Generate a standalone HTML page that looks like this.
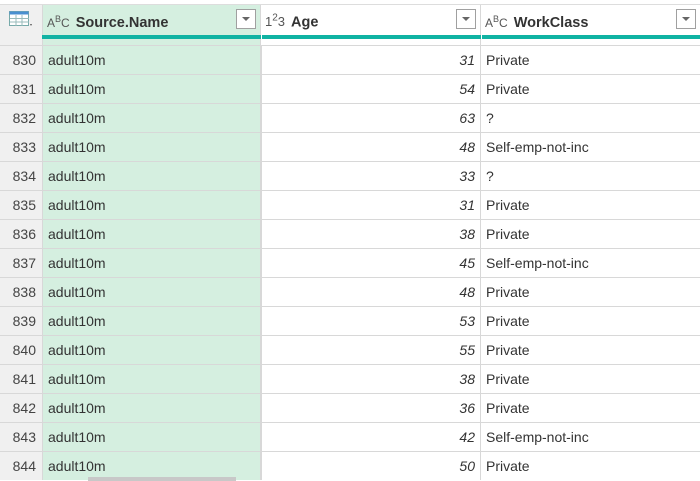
<!DOCTYPE html>
<html><head><style>
body{margin:0;width:700px;height:481px;overflow:hidden;background:#fff;font-family:"Liberation Sans",sans-serif;font-size:14px;color:#333;position:relative}
.a{position:absolute}
.row{position:absolute;left:0;width:700px;height:29px;border-top:1px solid #d8d8d8;box-sizing:border-box}
.row div{position:absolute;top:0;height:28px;line-height:29px}
.n{left:0;width:42px;background:#f0f0f0;text-align:right;padding-right:6px;box-sizing:border-box;color:#444}
.s{left:42px;width:218px;background:#d5efe0;padding-left:5px;box-sizing:border-box;border-left:1px solid #d8d8d8}
.g{left:261px;width:219px;text-align:right;padding-right:5px;box-sizing:border-box;font-style:italic;border-left:1px solid #d8d8d8}
.w{left:480px;width:220px;padding-left:5px;box-sizing:border-box;border-left:1px solid #d8d8d8}
.dd{position:absolute;top:9px;width:20px;height:20px;border:1px solid #a0a0a0;background:#fff;box-sizing:border-box}
.dd:after{content:"";position:absolute;left:5px;top:7px;border-left:4px solid transparent;border-right:4px solid transparent;border-top:4px solid #666}
.h{position:absolute;top:4px;height:30px;line-height:30px;font-weight:bold;font-size:14.5px;color:#333}
.t{font-weight:normal;font-size:12px;color:#555;margin-right:6px}
</style></head><body>
<div class="a" style="left:0;top:4px;width:42px;height:35px;background:#f0f0f0"></div>
<div class="a" style="left:42px;top:4px;width:218px;height:35px;background:#d5efe0"></div>
<div class="a" style="left:261px;top:4px;width:439px;height:31px;background:#fff"></div>
<div class="a" style="left:42px;top:4px;width:1px;height:476px;background:#d8d8d8"></div>
<div class="a" style="left:260px;top:4px;width:1px;height:476px;background:#d8d8d8"></div>
<div class="a" style="left:480px;top:4px;width:1px;height:476px;background:#d8d8d8"></div>
<div class="a" style="left:0;top:4px;width:700px;height:1px;background:#ddd"></div>
<svg class="a" style="left:9px;top:11px" width="24" height="16"><rect x="0.5" y="0.5" width="19" height="14" fill="#fff" stroke="#7aa"/><rect x="0.5" y="0.5" width="19" height="3" fill="#4a8fd0"/><path d="M7 4v11M13 4v11M1 7.5h19M1 11h19" stroke="#9bb" stroke-width="1"/><path d="M21 13l2 0-1 2z" fill="#555"/></svg>
<div class="h" style="left:47px"><span class="t">A<sup style="font-size:9px">B</sup>C</span>Source.Name</div>
<div class="dd" style="left:236px"></div>
<div class="h" style="left:265px"><span class="t" style="font-size:13px">1<sup style="font-size:10px">2</sup>3</span>Age</div>
<div class="dd" style="left:456px"></div>
<div class="h" style="left:485px"><span class="t">A<sup style="font-size:9px">B</sup>C</span>WorkClass</div>
<div class="dd" style="left:676px"></div>
<div class="a" style="left:42px;top:35px;width:658px;height:4px;background:#10b3a3"></div>
<div class="a" style="left:261px;top:35px;width:1px;height:4px;background:#fff"></div>
<div class="a" style="left:481px;top:35px;width:1px;height:4px;background:#fff"></div>
<div class="a" style="left:0;top:39px;width:42px;height:6px;background:#f0f0f0"></div>
<div class="a" style="left:43px;top:39px;width:217px;height:6px;background:#d5efe0"></div>
<div id="rows"></div>
<div class="a" style="left:88px;top:477px;width:148px;height:4px;background:#c8c8c8"></div>
<script>
var d=[[830,31,"Private"],[831,54,"Private"],[832,63,"?"],[833,48,"Self-emp-not-inc"],[834,33,"?"],[835,31,"Private"],[836,38,"Private"],[837,45,"Self-emp-not-inc"],[838,48,"Private"],[839,53,"Private"],[840,55,"Private"],[841,38,"Private"],[842,36,"Private"],[843,42,"Self-emp-not-inc"],[844,50,"Private"]];
var h="";d.forEach(function(r,i){h+='<div class="row" style="top:'+(45+i*29)+'px"><div class="n">'+r[0]+'</div><div class="s">adult10m</div><div class="g">'+r[1]+'</div><div class="w">'+r[2]+'</div></div>';});
document.getElementById("rows").innerHTML=h;
</script>
</body></html>
